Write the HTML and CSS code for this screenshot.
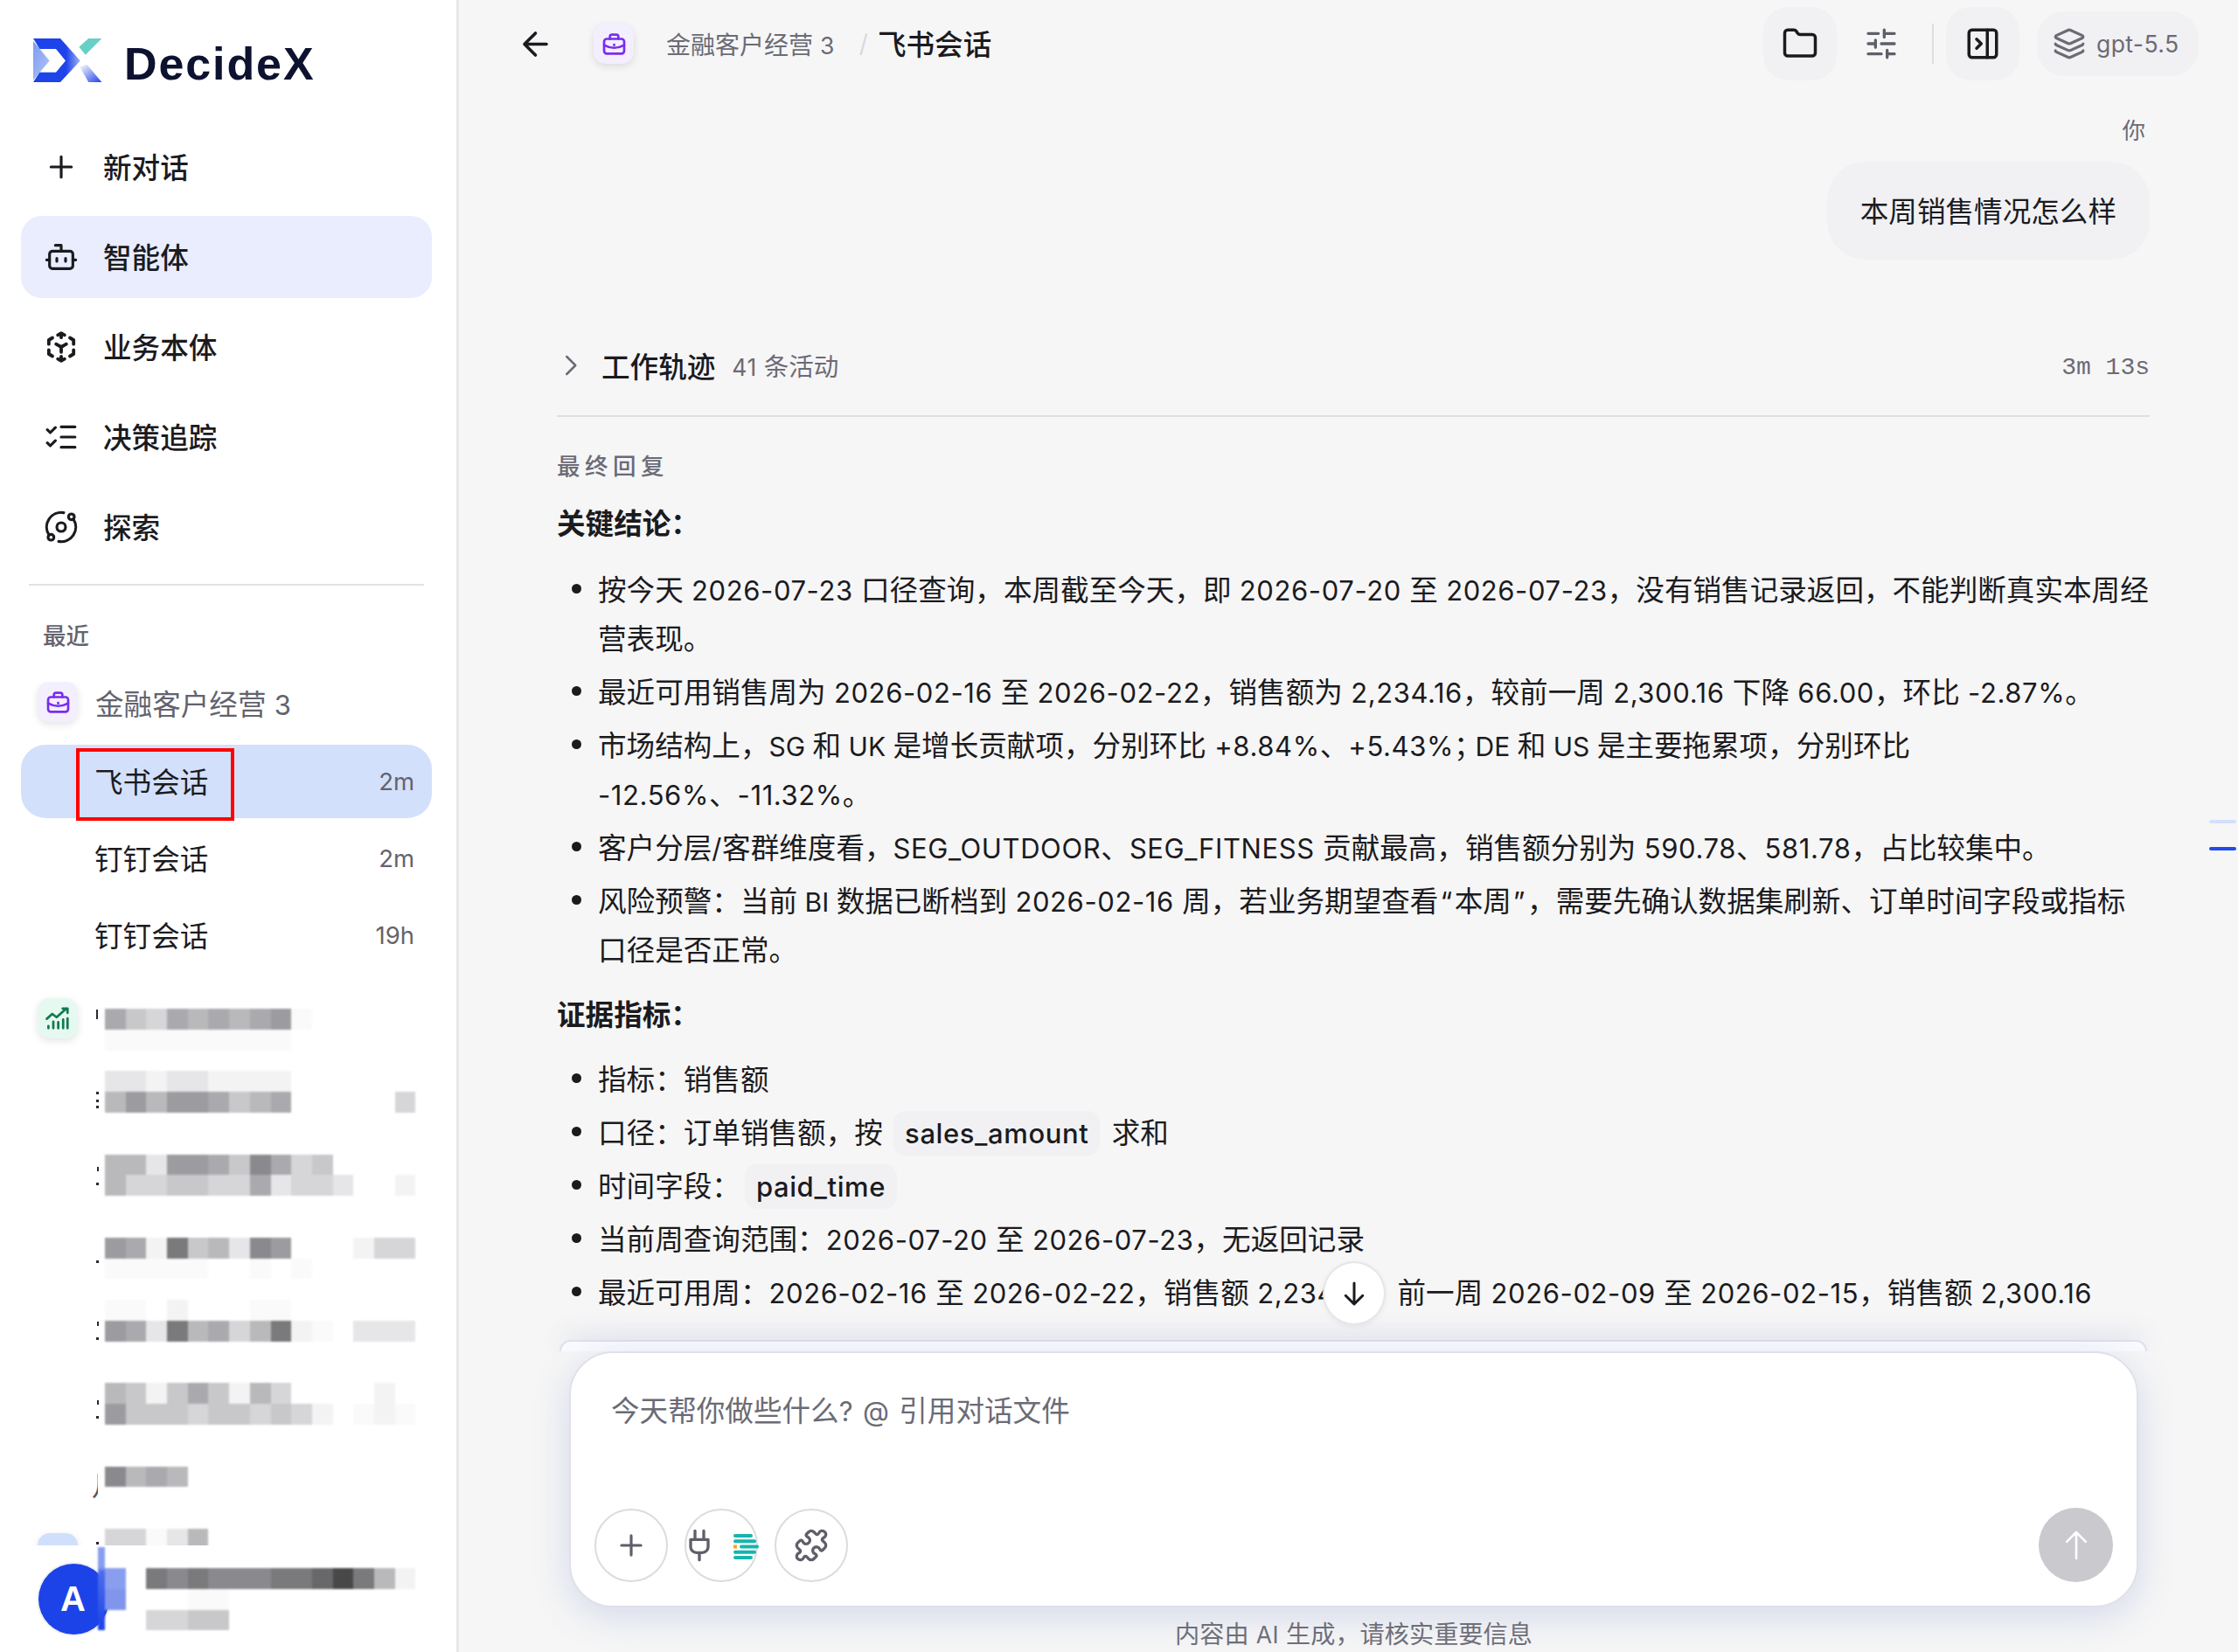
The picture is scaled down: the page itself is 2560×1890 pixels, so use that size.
FILE: index.html
```html
<!DOCTYPE html>
<html lang="zh-CN">
<head>
<meta charset="utf-8">
<title>DecideX</title>
<link rel="stylesheet" href="styles.css">
</head>
<body>
<div class="app">
  <aside class="sidebar">
    <div class="brand">
      <svg class="brand-mark" viewBox="0 0 79 50" width="79" height="50">
        <defs>
          <linearGradient id="lg1" x1="0" y1="0" x2="1" y2="1"><stop offset="0" stop-color="#7d9bf0"/><stop offset="1" stop-color="#b3c5f7"/></linearGradient>
          <linearGradient id="lg2" x1="0" y1="0" x2="1" y2="0"><stop offset="0" stop-color="#1d43ea"/><stop offset=".7" stop-color="#1d43ea"/><stop offset="1" stop-color="#9fb3f5"/></linearGradient>
          <linearGradient id="lg3" x1="0" y1="0" x2="1" y2="1"><stop offset="0" stop-color="#ffffff"/><stop offset="1" stop-color="#1d43ea"/></linearGradient>
        </defs>
        <polygon fill="url(#lg1)" points="0,3 18.6,25.4 0,47.8"/>
        <polygon fill="url(#lg2)" points="0,0 31,0 53.8,25.4 31,50 0,50 7.4,38.8 26,38.8 37,25.4 26,12 7.4,12"/>
        <polygon fill="#67cfc6" points="63.2,0 78.4,0 59.8,18.8 52.4,9.8"/>
        <polygon fill="url(#lg3)" points="53,32 61.5,30 78.4,50 63.2,50"/>
      </svg>
      <span class="brand-name">DecideX</span>
    </div>

    <nav class="nav">
      <a class="nav-item"><svg class="nav-icon" viewBox="0 0 24 24"><path d="M12 5v14M5 12h14"/></svg><span>新对话</span></a>
      <a class="nav-item is-active"><svg class="nav-icon" viewBox="0 0 24 24"><path d="M12 8V4H8"/><rect x="4" y="8" width="16" height="12" rx="2"/><path d="M2 14h2M20 14h2M15 13v2M9 13v2"/></svg><span>智能体</span></a>
      <a class="nav-item"><svg class="nav-icon nav-icon-cube" viewBox="0 0 24 24"><path d="M9.700 3.800L12 2.500l2.300 1.300M12 2.500V5.500M18 5.700l2.500 1.500V10M20.500 14v2.800L18 18.300M14.300 20.200L12 21.500l-2.300-1.300M12 21.500v-3M6 18.300l-2.500-1.500V14M3.500 10V7.200L6 5.700M12 12l-3.500-2M12 12l3.500-2M12 12v3.500"/></svg><span>业务本体</span></a>
      <a class="nav-item"><svg class="nav-icon" viewBox="0 0 24 24"><path d="M2.500 7l2 2 3.500-3.500M2.500 16l2 2 3.500-3.500M12 5h9.500M12 12h9.500M12 19h9.500"/></svg><span>决策追踪</span></a>
      <a class="nav-item"><svg class="nav-icon" viewBox="0 0 24 24"><path d="M20.341 6.484A10 10 0 0 1 10.266 21.850"/><path d="M3.659 17.516A10 10 0 0 1 13.740 2.152"/><circle cx="12" cy="12" r="3"/><circle cx="19" cy="5" r="2"/><circle cx="5" cy="19" r="2"/></svg><span>探索</span></a>
    </nav>

    <div class="side-rule"></div>
    <div class="recent-title">最近</div>

    <div class="recent">
      <div class="agent-row">
        <span class="tile tile-purple"><svg class="tile-icon" viewBox="0 0 24 24"><rect x="2.500" y="7" width="19" height="14" rx="2.500"/><path d="M8 7V5a2 2 0 0 1 2-2h4a2 2 0 0 1 2 2v2M2.500 13c3 1.700 6 2.500 9.500 2.500s6.500-.8 9.500-2.500M12 12.500v.5"/></svg></span>
        <span class="agent-name">金融客户经营<span class="l"> 3</span></span>
      </div>
      <div class="session is-current"><span class="session-name">飞书会话</span><span class="session-time">2m</span><span class="highlight"></span></div>
      <div class="session"><span class="session-name">钉钉会话</span><span class="session-time">2m</span></div>
      <div class="session"><span class="session-name">钉钉会话</span><span class="session-time">19h</span></div>

      <div class="obscured">
        <div class="rail">
          <span class="tile tile-green"><svg class="tile-icon" viewBox="0 0 24 24"><path d="M2 12.500l5-4.500 4 3 9-8M16.500 3H21v4M3.500 21v-2M8 21v-6M12.500 21v-5.500M17 21v-8M21 21v-9"/></svg></span>
          <svg class="slivers" viewBox="0 0 8 640" width="8" height="640">
            <rect x="4" y="13" width="2" height="11"/><rect x="4" y="107" width="3" height="3"/><rect x="4" y="116" width="3" height="3"/><rect x="4" y="123" width="3" height="3"/>
            <rect x="5" y="193" width="2" height="5"/><rect x="4" y="211" width="3" height="3"/><rect x="4" y="300" width="3" height="3"/>
            <rect x="5" y="370" width="2" height="5"/><rect x="4" y="388" width="3" height="3"/><rect x="5" y="460" width="2" height="5"/><rect x="4" y="478" width="3" height="3"/><rect x="4" y="622" width="3" height="3"/>
          </svg>
          <span class="sliver-glyph">月</span>
          <span class="tile tile-blue"></span>
        </div>
        <div class="mosaic">
          <div class="mrow"><i class="ga8"></i><i class="gc8"></i><i class="gd8"></i><i class="ga8"></i><i class="gb8"></i><i class="ga8"></i><i class="gb8"></i><i class="ga8"></i><i class="g98"></i><i class="gfb"></i></div>
          <div class="mrow"><i class="gfb"></i><i class="gfb"></i><i class="gfb"></i><i class="gfb"></i><i class="gfb"></i><i class="gfb"></i><i class="gfb"></i><i class="gfb"></i><i class="gfb"></i></div>
          <div class="mrow"></div>
          <div class="mrow"><i class="ge8"></i><i class="ge8"></i><i class="gf4"></i><i class="ge8"></i><i class="ge8"></i><i class="gf4"></i><i class="gf4"></i><i class="gf4"></i><i class="gf4"></i></div>
          <div class="mrow"><i class="gb8"></i><i class="g98"></i><i class="gb8"></i><i class="g98"></i><i class="g98"></i><i class="ga8"></i><i class="gc8"></i><i class="gb8"></i><i class="ga8"></i><i></i><i></i><i></i><i></i><i></i><i class="gd8"></i></div>
          <div class="mrow"></div>
          <div class="mrow"></div>
          <div class="mrow"><i class="gb8"></i><i class="gb8"></i><i class="ge8"></i><i class="g98"></i><i class="g98"></i><i class="ga8"></i><i class="gc8"></i><i class="g88"></i><i class="ga8"></i><i class="gd8"></i><i class="gc8"></i></div>
          <div class="mrow"><i class="gb8"></i><i class="gd8"></i><i class="gd8"></i><i class="gc8"></i><i class="gc8"></i><i class="gd8"></i><i class="gd8"></i><i class="ga8"></i><i class="ge8"></i><i class="gd8"></i><i class="gd8"></i><i class="ge8"></i><i></i><i></i><i class="gf4"></i></div>
          <div class="mrow"></div>
          <div class="mrow"></div>
          <div class="mrow"><i class="g98"></i><i class="ga8"></i><i class="gf4"></i><i class="g78"></i><i class="gc8"></i><i class="gb8"></i><i class="ge8"></i><i class="g88"></i><i class="g98"></i><i></i><i></i><i></i><i class="gf4"></i><i class="gd8"></i><i class="gd8"></i></div>
          <div class="mrow"><i class="gfb"></i><i class="gfb"></i><i class="gfb"></i><i class="gfb"></i><i class="gfb"></i><i></i><i></i><i class="gfb"></i><i></i><i class="gfb"></i></div>
          <div class="mrow"></div>
          <div class="mrow"><i class="gfb"></i><i class="gfb"></i><i></i><i class="gf4"></i><i></i><i></i><i></i><i class="gfb"></i><i class="gfb"></i></div>
          <div class="mrow"><i class="g98"></i><i class="ga8"></i><i class="ge8"></i><i class="g78"></i><i class="gb8"></i><i class="ga8"></i><i class="gd8"></i><i class="gb8"></i><i class="g78"></i><i class="gf4"></i><i class="gfb"></i><i></i><i class="ge8"></i><i class="ge8"></i><i class="ge8"></i></div>
          <div class="mrow"></div>
          <div class="mrow"></div>
          <div class="mrow"><i class="gb8"></i><i class="gc8"></i><i class="gf4"></i><i class="gc8"></i><i class="ga8"></i><i class="gc8"></i><i class="gf4"></i><i class="gb8"></i><i class="gd8"></i><i></i><i></i><i></i><i></i><i class="gf4"></i></div>
          <div class="mrow"><i class="g98"></i><i class="gc8"></i><i class="gc8"></i><i class="gc8"></i><i class="gd8"></i><i class="gc8"></i><i class="gc8"></i><i class="gd8"></i><i class="gc8"></i><i class="gd8"></i><i class="gf4"></i><i></i><i class="gfb"></i><i class="gf4"></i><i class="gfb"></i></div>
          <div class="mrow"></div>
          <div class="mrow"></div>
          <div class="mrow"><i class="g88"></i><i class="gb8"></i><i class="ga8"></i><i class="gb8"></i></div>
          <div class="mrow"></div>
          <div class="mrow"></div>
          <div class="mrow"><i class="gd8"></i><i class="gd8"></i><i class="gfb"></i><i class="ge8"></i><i class="gb8"></i></div>
        </div>
      </div>
    </div>

    <div class="side-foot">
      <span class="avatar">A</span>
      <div class="mosaic foot-mosaic">
        <span class="avatar-strip"></span>
        <div class="mrow"><i class="gblue1"></i><i></i><i class="g78"></i><i class="g88"></i><i class="g78"></i><i class="g88"></i><i class="g88"></i><i class="g88"></i><i class="g78"></i><i class="g78"></i><i class="g68"></i><i class="g48"></i><i class="g78"></i><i class="gb8"></i><i class="gf4"></i></div>
        <div class="mrow"><i class="gblue2"></i><i></i><i></i><i></i><i class="gfb"></i><i class="gfb"></i></div>
        <div class="mrow"><i></i><i></i><i class="gd8"></i><i class="gd8"></i><i class="gc8"></i><i class="gc8"></i></div>
      </div>
    </div>
  </aside>

  <main class="main">
    <header class="topbar">
      <svg class="ico ico-back" viewBox="0 0 24 24"><path d="M19 12H5M12 19l-7-7 7-7"/></svg>
      <span class="tile tile-purple crumb-tile"><svg class="tile-icon" viewBox="0 0 24 24"><rect x="2.500" y="7" width="19" height="14" rx="2.500"/><path d="M8 7V5a2 2 0 0 1 2-2h4a2 2 0 0 1 2 2v2M2.500 13c3 1.700 6 2.500 9.500 2.500s6.500-.8 9.500-2.500M12 12.500v.5"/></svg></span>
      <span class="crumb">金融客户经营<span class="l-sm"> 3</span></span>
      <span class="crumb-sep">/</span>
      <span class="crumb-current">飞书会话</span>
      <div class="tools">
        <button class="tool is-filled"><svg class="ico" viewBox="0 0 24 24"><path d="M20 20a2 2 0 0 0 2-2V8a2 2 0 0 0-2-2h-7.900a2 2 0 0 1-1.690-.9L9.600 3.900A2 2 0 0 0 7.930 3H4a2 2 0 0 0-2 2v13a2 2 0 0 0 2 2Z"/></svg></button>
        <button class="tool tool-sliders"><svg class="ico ico-muted" viewBox="0 0 24 24"><path d="M21 5h-7M10 5H3M21 12h-9M8 12H3M21 19h-5M12 19H3M14 2.500v5M8 9.500v5M16 16.500v5"/></svg></button>
        <span class="tool-rule"></span>
        <button class="tool is-filled"><svg class="ico" viewBox="0 0 24 24"><rect x="3" y="3" width="18" height="18" rx="2"/><path d="M15 3v18M8 9l3 3-3 3"/></svg></button>
        <button class="model"><svg class="ico ico-layers" viewBox="0 0 24 24"><path d="M12.830 2.180a2 2 0 0 0-1.660 0L2.600 6.080a1 1 0 0 0 0 1.830l8.580 3.910a2 2 0 0 0 1.660 0l8.580-3.900a1 1 0 0 0 0-1.830z"/><path d="M2 12a1 1 0 0 0 .58.910l8.600 3.910a2 2 0 0 0 1.650 0l8.580-3.900A1 1 0 0 0 22 12"/><path d="M2 17a1 1 0 0 0 .58.910l8.600 3.910a2 2 0 0 0 1.650 0l8.580-3.900A1 1 0 0 0 22 17"/></svg><span>gpt-5.5</span></button>
      </div>
    </header>

    <section class="thread">
      <div class="who">你</div>
      <div class="bubble"><span>本周销售情况怎么样</span></div>

      <div class="trail">
        <svg class="ico ico-chev" viewBox="0 0 24 24"><path d="M9 4l8 8-8 8"/></svg>
        <span class="trail-title">工作轨迹</span>
        <span class="trail-meta"><span class="l-sm">41 </span>条活动</span>
        <span class="trail-time">3m 13s</span>
      </div>

      <div class="answer-label">最终回复</div>
      <h3 class="answer-h">关键结论：</h3>
      <ul class="answer-list">
        <li>按今天<span class="l"> 2026-07-23 </span>口径查询，本周截至今天，即<span class="l"> 2026-07-20 </span>至<span class="l"> 2026-07-23</span>，没有销售记录返回，不能判断真实本周经营表现。</li>
        <li>最近可用销售周为<span class="l"> 2026-02-16 </span>至<span class="l"> 2026-02-22</span>，销售额为<span class="l"> 2,234.16</span>，较前一周<span class="l"> 2,300.16 </span>下降<span class="l"> 66.00</span>，环比<span class="l"> -2.87%</span>。</li>
        <li>市场结构上，<span class="lc">SG </span>和<span class="lc"> UK </span>是增长贡献项，分别环比<span class="l"> +8.84%</span>、<span class="l">+5.43%</span><span class="semi">；</span><span class="lc">DE </span>和<span class="lc"> US </span>是主要拖累项，分别环比<span class="l"> -12.56%</span>、<span class="l">-11.32%</span>。</li>
        <li>客户分层<span class="l">/</span>客群维度看，<span class="l">SEG_OUTDOOR</span>、<span class="l">SEG_FITNESS </span>贡献最高，销售额分别为<span class="l"> 590.78</span>、<span class="l">581.78</span>，占比较集中。</li>
        <li>风险预警：当前<span class="lc"> BI </span>数据已断档到<span class="l"> 2026-02-16 </span>周，若业务期望查看<span class="l q">“</span>本周<span class="l q">”</span>，需要先确认数据集刷新、订单时间字段或指标口径是否正常。</li>
      </ul>
      <h3 class="answer-h answer-h2">证据指标：</h3>
      <ul class="answer-list">
        <li>指标：销售额</li>
        <li>口径：订单销售额，按 <code class="code">sales_amount</code> 求和</li>
        <li>时间字段：<code class="code">paid_time</code></li>
        <li>当前周查询范围：<span class="l">2026-07-20 </span>至<span class="l"> 2026-07-23</span>，无返回记录</li>
        <li>最近可用周：<span class="l">2026-02-16 </span>至<span class="l"> 2026-02-22</span>，销售额<span class="l"> 2,234.16</span>，前一周<span class="l"> 2026-02-09 </span>至<span class="l"> 2026-02-15</span>，销售额<span class="l"> 2,300.16</span></li>
      </ul>
    </section>

    <div class="dock">
      <div class="peek"></div>
      <div class="shell">
        <div class="composer">
          <div class="placeholder">今天帮你做些什么<span class="l">? @ </span>引用对话文件</div>
          <div class="composer-bar">
            <button class="round"><svg class="ico ico-muted" viewBox="0 0 24 24"><path d="M12 5v14M5 12h14"/></svg></button>
            <button class="round round-duo">
              <svg class="ico ico-muted ico-plug" viewBox="0 0 24 24"><path d="M12 22v-5M9 8V2M15 8V2M18 8v5a4 4 0 0 1-4 4h-4a4 4 0 0 1-4-4V8Z"/></svg>
              <svg class="teal-mark" viewBox="0 0 29 29" width="29" height="29"><g fill="#16b5ad"><rect x="0" y="0" width="22" height="4" rx="2"/><rect x="0" y="6.200" width="26" height="4" rx="2"/><rect x="7" y="12.500" width="22" height="4" rx="2"/><rect x="0" y="18.700" width="26" height="4" rx="2"/><rect x="0" y="25" width="22" height="4" rx="2"/></g><rect x="0" y="12.500" width="4" height="4" fill="#f5a623"/></svg>
            </button>
            <button class="round"><svg class="ico ico-muted ico-puzzle" viewBox="0 0 24 24"><path d="M19.439 7.850c-.049.322.059.648.289.878l1.568 1.568c.47.47.706 1.087.706 1.704s-.235 1.233-.706 1.704l-1.611 1.611a.98.98 0 0 1-.837.276c-.47-.07-.802-.48-.968-.925a2.501 2.501 0 1 0-3.214 3.214c.446.166.855.497.925.968a.979.979 0 0 1-.276.837l-1.610 1.610a2.404 2.404 0 0 1-1.705.707 2.402 2.402 0 0 1-1.704-.706l-1.568-1.568a1.026 1.026 0 0 0-.877-.29c-.493.074-.84.504-1.020.968a2.500 2.500 0 1 1-3.237-3.237c.464-.18.894-.527.967-1.020a1.026 1.026 0 0 0-.289-.877l-1.568-1.568A2.402 2.402 0 0 1 1.998 12c0-.617.236-1.234.706-1.704L4.230 8.770c.24-.24.581-.353.917-.303.515.077.877.528 1.073 1.010a2.500 2.500 0 1 0 3.259-3.259c-.482-.196-.933-.558-1.010-1.073-.05-.336.062-.676.303-.917l1.525-1.525A2.402 2.402 0 0 1 12 1.998c.617 0 1.234.236 1.704.706l1.568 1.568c.23.23.556.338.877.29.493-.074.84-.504 1.020-.968a2.500 2.500 0 1 1 3.237 3.237c-.464.18-.894.527-.967 1.020Z"/></svg></button>
            <button class="send"><svg class="ico ico-send" viewBox="0 0 24 24"><path d="M12 21V3M5.500 9.500L12 3l6.500 6.500"/></svg></button>
          </div>
        </div>
        <div class="footnote">内容由<span class="l-sm"> AI </span>生成，请核实重要信息</div>
      </div>
    </div>

    <button class="scroll-down"><svg class="ico" viewBox="0 0 24 24"><path d="M12 4v16M5.500 13.500L12 20l6.500-6.500"/></svg></button>
    <span class="mark mark-a"></span>
    <span class="mark mark-b"></span>
  </main>
</div>
</body>
</html>
```

FILE: styles.css
```css
* { box-sizing: border-box; }
html, body { margin: 0; height: 100%; }
body {
  font-family: "Noto Sans CJK SC", "Noto Sans", sans-serif;
  font-size: 32.600px;
  color: #1b1b1f;
  background: #f6f6f6;
  overflow: hidden;
}
button { font: inherit; color: inherit; border: 0; background: none; padding: 0; }
svg { display: block; flex: none; }

.app { display: flex; height: 1890px; }

/* latin runs */
.l { font-family: Inter, sans-serif; font-size: 31px; letter-spacing: .6px; line-height: 1; }
.lc { font-family: Inter, sans-serif; font-size: 30px; line-height: 1; }
.l-sm { font-family: Inter, sans-serif; font-size: 26.500px; letter-spacing: .5px; line-height: 1; }
.q { padding: 0 2px; }
.semi { letter-spacing: -8px; }

/* sidebar */
.sidebar {
  width: 525px;
  flex: none;
  height: 1890px;
  display: flex;
  flex-direction: column;
  background: #ffffff;
  border-right: 3px solid #e7e7e9;
  padding-left: 24px;
  padding-right: 28px;
  overflow: hidden;
}
.brand { height: 144px; flex: none; display: flex; padding: 44px 0 0 14px; }
.brand-name {
  margin-left: 25px;
  margin-top: 4px;
  font-family: "Liberation Sans", sans-serif;
  font-weight: 700;
  font-size: 52px;
  line-height: 50px;
  letter-spacing: 1.900px;
  color: #0d1230;
}
.nav { display: flex; flex-direction: column; gap: 9px; flex: none; }
.nav-item {
  height: 94px;
  display: flex;
  align-items: center;
  border-radius: 24px;
  font-weight: 500;
  padding-left: 26px;
  gap: 28px;
}
.nav-item span { margin-top: -3px; }
.nav-item.is-active { background: #e9edfd; }
.nav-icon { width: 40px; height: 40px; fill: none; stroke: #1b1b1f; stroke-width: 1.900; stroke-linecap: round; stroke-linejoin: round; }
.nav-icon-cube { stroke-width: 2.300; }
.side-rule { height: 2px; background: #e2e2e4; margin: 18px 9px 0; flex: none; }
.recent-title { flex: none; margin: 37px 0 0 25px; font-size: 26.500px; line-height: 38px; font-weight: 500; color: #63636e; }

.recent { flex: 1; min-height: 0; overflow: hidden; position: relative; margin-top: 35px; }
.tile {
  width: 46px; height: 46px; border-radius: 14px;
  display: flex; align-items: center; justify-content: center;
  box-shadow: 0 3px 8px rgba(30, 30, 60, .12);
  flex: none;
}
.tile-purple { background: #f3effe; }
.tile-green { background: #e6f9f1; }
.tile-blue { background: #d0dffc; }
.tile-icon { width: 29px; height: 29px; fill: none; stroke-width: 2.200; stroke-linecap: round; stroke-linejoin: round; }
.tile-purple .tile-icon { stroke: #7a2cf0; }
.tile-green .tile-icon { stroke: #127a50; width: 30px; height: 30px; }

.agent-row { display: flex; align-items: center; height: 46px; margin-left: 19px; gap: 20px; }
.agent-name { color: #63636e; }
.session {
  height: 84px;
  margin-bottom: 4px;
  display: flex;
  align-items: center;
  justify-content: space-between;
  padding: 0 20px 0 84px;
  border-radius: 28px;
  position: relative;
}
.session-name { margin-top: -3px; }
.agent-row + .session { margin-top: 26px; }
.session.is-current { background: #d3e0fc; }
.session-time { font-family: Inter, sans-serif; font-size: 27.500px; color: #63636e; }
.highlight { position: absolute; left: 63px; top: 4px; width: 181px; height: 83px; border: 4px solid #ff0000; }

.obscured { display: flex; margin-top: 30px; position: relative; }
.rail { width: 96px; flex: none; position: relative; padding-left: 19px; }
.slivers { position: absolute; left: 82px; top: 0; fill: #2a2a30; }
.sliver-glyph {
  position: absolute; left: 81px; top: 535px; width: 7px; height: 40px;
  overflow: hidden; color: #55555f; font-size: 32px; line-height: 40px;
}
.tile-blue { position: absolute; left: 19px; top: 612px; }
.tile-blue::after { content: ""; width: 8px; height: 6px; margin-top: 20px; border-radius: 2px 2px 0 0; background: #2f55e8; }
.mosaic { margin-top: 12px; filter: blur(1px); }
.mrow { display: flex; height: 23.800px; }
.mrow i { width: 23.700px; height: 100%; flex: none; display: block; }
.g48 { background: #484848; }
.g68 { background: #68686a; }
.g78 { background: #7a7a7c; }
.g88 { background: #8a8a8e; }
.g98 { background: #9c9ca0; }
.ga8 { background: #aaaaae; }
.gb8 { background: #b9b9bc; }
.gc8 { background: #c8c8cb; }
.gd8 { background: #d6d6d9; }
.ge8 { background: #e6e6e8; }
.gf4 { background: #f3f3f4; }
.gfb { background: #fafafa; }
.gblue1 { background: #8a9ef0; }
.gblue2 { background: #8096ec; }

.side-foot {
  flex: none; height: 122px; background: #ffffff; position: relative; z-index: 1;
  display: flex; align-items: flex-start; margin-right: -20px;
  padding: 21px 0 0 20px;
}
.avatar {
  width: 81px; height: 81px; border-radius: 50%;
  background: #1c43e8; color: #fff;
  display: flex; align-items: center; justify-content: center;
  font-family: "Liberation Sans", sans-serif; font-weight: 700; font-size: 40px;
  box-shadow: 0 0 0 2px #f0f0f2;
  margin-right: -5px; flex: none;
  padding-right: 2px;
}
.foot-mosaic { margin-top: 5px; position: relative; }
.avatar-strip {
  position: absolute; left: -8px; top: -24px; width: 8px; height: 95px;
  background: linear-gradient(#8a9ef0 0 24%, #4d6cec 30%, #2b4fea 80%, #1c43e8);
}

/* main */
.main { flex: 1; min-width: 0; height: 1890px; display: flex; flex-direction: column; position: relative; }
.topbar { height: 100px; flex: none; display: flex; align-items: center; padding: 0 45px 0 66px; }
.ico { width: 42px; height: 42px; fill: none; stroke: #1b1b1f; stroke-width: 2; stroke-linecap: round; stroke-linejoin: round; }
.ico-muted { stroke: #5f5f6a; }
.ico-back { width: 43px; height: 43px; margin-right: 45px; }
.crumb { margin-left: 37px; font-size: 28px; color: #6b6b76; white-space: nowrap; }
.crumb-sep { margin-left: 28px; font-family: Inter, sans-serif; font-size: 28px; color: #d9d9dc; }
.crumb-current { margin-left: 11px; margin-top: -3px; font-weight: 500; }
.tools { margin-left: auto; display: flex; align-items: center; }
.tool { width: 84px; height: 84px; border-radius: 28px; display: flex; align-items: center; justify-content: center; }
.tool.is-filled { background: #f1f1f3; }
.tool-sliders { margin-left: 9px; }
.tool-sliders .ico { width: 40px; height: 40px; }
.tool-rule { width: 2px; height: 46px; background: #dedee0; margin: 0 14px 0 16px; }
.model {
  margin-left: 20px; height: 74px; width: 185px; border-radius: 32px; background: #f1f1f3;
  display: flex; align-items: center; padding-left: 18px; gap: 12px;
  font-family: Inter, sans-serif; font-size: 26.500px; letter-spacing: .4px; color: #6b6b76;
}
.ico-layers { width: 38px; height: 38px; stroke: #6b6b76; }

.thread { flex: 1; min-height: 0; overflow: hidden; padding: 28px 101px 0 112px; display: flex; flex-direction: column; }
.thread > * { flex: none; }
.who { align-self: flex-end; margin-right: 5px; font-size: 26.500px; line-height: 40px; color: #6b6b76; }
.bubble {
  align-self: flex-end; margin-top: 17px; height: 112px; padding: 0 38px;
  display: flex; align-items: center; background: #f1f1f3; border-radius: 44px;
}
.bubble span { margin-top: -3px; }
.trail {
  margin-top: 93px; height: 87px; padding-bottom: 29px;
  display: flex; align-items: center; border-bottom: 2px solid #dfdfe1;
}
.ico-chev { width: 30px; height: 30px; margin-right: 21px; stroke: #6b6b76; }
.trail-title { font-weight: 500; margin-top: -2px; }
.trail-meta { margin-left: 19px; font-size: 28.500px; color: #6b6b76; margin-top: -1px; }
.trail-time { margin-left: auto; margin-top: 4px; font-family: "Liberation Mono", monospace; font-size: 28px; color: #6b6b76; }
.answer-label { margin-top: 35px; font-size: 26.500px; line-height: 40px; font-weight: 500; letter-spacing: 5.500px; color: #6b6b76; }
.answer-h { margin: 17px 0 20px; font-size: 32.600px; line-height: 56px; font-weight: 700; }
.answer-h2 { margin: 18px 0 18px; }
.answer-list { margin: 0; padding: 0 0 0 47px; list-style: none; }
.answer-list li { line-height: 56px; margin-bottom: 5px; position: relative; }
.answer-list li:last-child { margin-bottom: 0; }
.answer-list li::before { content: ""; position: absolute; left: -30px; top: 23px; width: 11px; height: 11px; border-radius: 50%; background: #1b1b1f; }
.code {
  font-family: Inter, sans-serif; font-size: 31px; letter-spacing: .6px; font-weight: 500; line-height: 1;
  background: #f1f1f3; border-radius: 14px; padding: 7px 13px; margin: 0 6px 0 5px;
}

/* composer */
.dock { flex: none; height: 357px; display: flex; flex-direction: column; position: relative; z-index: 2; }
.peek {
  flex: none; height: 13px; margin: 0 104px 0 115px;
  background: #fafbfe; border: 2px solid #dfe0e8; border-bottom: 0; border-radius: 20px 20px 0 0;
  box-shadow: 0 -6px 28px rgba(60, 80, 180, .14);
}
.shell { flex: 1; background: #f6f6f6; margin: 0 60px 0 95px; padding: 0 54px 0 31px; position: relative; }
.composer {
  height: 293px; background: #fff; border: 2px solid #e0e1e8; border-radius: 50px;
  box-shadow: 0 10px 44px rgba(50, 80, 190, .17);
  padding: 36px 27px 27px 46px;
  display: flex; flex-direction: column; justify-content: space-between;
  position: relative;
}
.placeholder { line-height: 56px; color: #6b6b76; word-spacing: 1.500px; }
.composer-bar { display: flex; align-items: center; gap: 19px; margin-left: -19px; }
.round {
  width: 84px; height: 84px; border-radius: 50%; border: 2px solid #dcdcde;
  display: flex; align-items: center; justify-content: center;
}
.round .ico { width: 38px; height: 38px; }
.round-duo { justify-content: flex-start; position: relative; }
.round .ico-plug { width: 40px; height: 40px; margin-left: -5px; }
.teal-mark { position: absolute; left: 54px; top: 27px; }
.round .ico-puzzle { width: 40px; height: 40px; }
.send { margin-left: auto; width: 85px; height: 85px; border-radius: 50%; background: #c9c9ce; display: flex; align-items: center; justify-content: center; }
.ico-send { stroke: #fff; stroke-width: 1.600; width: 40px; height: 40px; }
.footnote { position: relative; text-align: center; font-size: 28.200px; line-height: 40px; margin-top: 9px; color: #6f6f7a; }

.scroll-down {
  position: absolute; left: 988px; top: 1443px; width: 72px; height: 73px; border-radius: 50%;
  background: #fff; border: 2px solid #e6e6e9; z-index: 3;
  display: flex; align-items: center; justify-content: center;
  box-shadow: 0 2px 6px rgba(0, 0, 0, .06);
}
.scroll-down .ico { width: 36px; height: 36px; }
.mark { position: absolute; left: 2002px; width: 31px; height: 4px; border-radius: 2px; }
.mark-a { top: 938px; background: #d3e0fc; }
.mark-b { top: 969px; background: #1f4bef; }
```
